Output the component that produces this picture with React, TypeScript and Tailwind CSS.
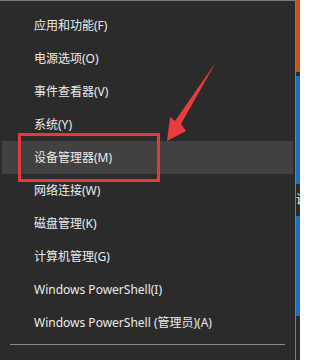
import React from "react";

const items = [
  "应用和功能(F)",
  "电源选项(O)",
  "事件查看器(V)",
  "系统(Y)",
  "设备管理器(M)",
  "网络连接(W)",
  "磁盘管理(K)",
  "计算机管理(G)",
  "Windows PowerShell(I)",
  "Windows PowerShell (管理员)(A)",
];

export default function App() {
  return (
    <div
      className="relative flex w-[300px] h-[360px] overflow-hidden bg-[#2b2b2b]"
      style={{ fontFamily: '"Noto Sans", "Noto Sans CJK SC", sans-serif' }}
    >
      <div className="flex flex-col w-[296px] h-full border-t border-r border-[#7c7c7c] bg-[#2b2b2b] pt-[8px]">
        {items.map((t, i) => (
          <div key={t} className="px-[2px]">
            <div
              className={
                "flex items-center h-[33px] pl-[32px] text-[12px] text-[#ececec] " +
                (i === 4 ? "bg-[#414141]" : "")
              }
            >
              {t}
            </div>
          </div>
        ))}
        <div className="mt-[5px] mx-[10px] h-px bg-[#8a8a8a]" />
      </div>
      <div className="flex flex-col w-[4px] h-full">
        <div className="h-[72px] bg-[#c8521c]" />
        <div className="h-[4px] bg-[#2b2b2b]" />
        <div className="h-[108px] bg-[#1b6fc4]" />
        <div className="flex h-[32px] items-center overflow-hidden bg-[#2b2b2b] text-[12px] leading-none text-white">
          说
        </div>
        <div className="h-[100px] bg-[#1b6fc4]" />
        <div className="flex-1 bg-[#2b2b2b]" />
      </div>

      <div className="absolute left-[18px] top-[133px] w-[142px] h-[49px] border-[3px] border-[#e53a3c]" />
      <svg
        className="absolute left-0 top-0"
        width="300"
        height="360"
        viewBox="0 0 300 360"
      >
        <polygon
          points="216,62 181,124 186,131 167,141 170,117 175,121"
          fill="#ec3b3e"
        />
      </svg>
    </div>
  );
}
